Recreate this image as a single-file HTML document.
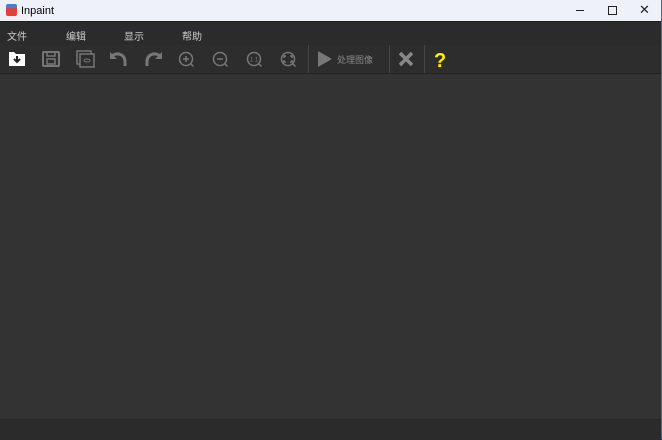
<!DOCTYPE html>
<html><head><meta charset="utf-8"><style>
body{margin:0;width:662px;height:439px;overflow:hidden;background:#333;font-family:"Liberation Sans","Noto Sans CJK SC",sans-serif;position:relative}
.title{position:absolute;left:0;top:0;width:662px;height:21px;background:#eef2f8;font-size:11px;color:#000}
.menu{position:absolute;left:0;top:21px;width:661px;height:23px;background:#2b2b2b;border-top:1px solid #1c1c1c;color:#ccc;font-size:10px}
.menu span{position:absolute;top:6px}
.tb{position:absolute;left:0;top:45px;width:661px;height:28px;background:#2d2d2d;border-bottom:1px solid #222}
.main{position:absolute;left:0;top:74px;width:661px;height:345px;background:#333}
.status{position:absolute;left:0;top:419px;width:661px;height:20px;background:#2b2b2b;border-top:1px solid #262626}
.sep{position:absolute;top:0;width:1px;height:28px;background:#444}
svg{position:absolute}
</style></head><body>
<div class="title">
<div style="position:absolute;left:6px;top:4px;width:11px;height:12px;border-radius:2px;background:linear-gradient(#4a7fd0 0 35%,#e0413a 35%)"></div>
<span style="position:absolute;left:21px;top:5px">Inpaint</span>
<div style="position:absolute;left:576px;top:10px;width:8px;height:1px;background:#222"></div>
<div style="position:absolute;left:608px;top:6px;width:7px;height:7px;border:1px solid #222"></div>
<span style="position:absolute;left:639px;top:2px;font-size:13px;color:#222">✕</span>
</div>
<div class="menu"><span style="left:7px">文件</span><span style="left:66px">编辑</span><span style="left:124px">显示</span><span style="left:182px">帮助</span></div>
<div class="tb">
<svg width="662" height="28" viewBox="0 0 662 28" fill="none">
<path d="M9 7h5l2 2h9v12H9z" fill="#fff"/><path d="M17 11v6M14 14l3 3 3-3" stroke="#222" stroke-width="2"/>
<rect x="43" y="7" width="16" height="14" rx="1" stroke="#777" stroke-width="2"/><rect x="47" y="7" width="8" height="4" stroke="#777" stroke-width="1.5"/><rect x="47" y="14" width="8" height="5" stroke="#777" stroke-width="1.5"/>
<rect x="77" y="6" width="14" height="13" stroke="#777" stroke-width="1.5"/><rect x="80" y="9" width="14" height="13" fill="#2d2d2d" stroke="#777" stroke-width="1.5"/><ellipse cx="87" cy="15.5" rx="3" ry="1.5" stroke="#777"/>
<path d="M112 11c5-4 13-2 13 6v4" stroke="#777" stroke-width="3"/><path d="M110 7v7h7z" fill="#777"/>
<path d="M160 11c-5-4-13-2-13 6v4" stroke="#777" stroke-width="3"/><path d="M162 7v7h-7z" fill="#777"/>
<g stroke="#777" stroke-width="1.5"><circle cx="186" cy="14" r="6.5"/><path d="M190.5 18.5l3 3M183 14h6M186 11v6"/>
<circle cx="220" cy="14" r="6.5"/><path d="M224.5 18.5l3 3M217 14h6"/>
<circle cx="254" cy="14" r="6.5"/><path d="M258.5 18.5l3 3"/>
<circle cx="288" cy="14" r="6.5"/><path d="M292.5 18.5l3 3M284 13v-2h2M290 11h2v2M292 15v2h-2M286 17h-2v-2"/></g>
<text x="250" y="16.5" fill="#777" font-size="6" font-family="Liberation Sans">1:1</text>
<path d="M318 6l14 8-14 8z" fill="#777"/>
<text x="337" y="18" fill="#888" font-size="9" font-family="Liberation Sans,Noto Sans CJK SC,sans-serif">处理图像</text>
<path d="M400 8l12 12M412 8l-12 12" stroke="#888" stroke-width="3.5"/>
<text x="434" y="22" fill="#ffef00" font-size="20" font-weight="bold" font-family="Liberation Sans">?</text>
</svg>
<div class="sep" style="left:308px"></div><div class="sep" style="left:389px"></div><div class="sep" style="left:424px"></div>
</div>
<div class="main"></div>
<div class="status"></div>
<div style="position:absolute;left:661px;top:0;width:1px;height:439px;background:#3a6ea5"></div>
</body></html>
